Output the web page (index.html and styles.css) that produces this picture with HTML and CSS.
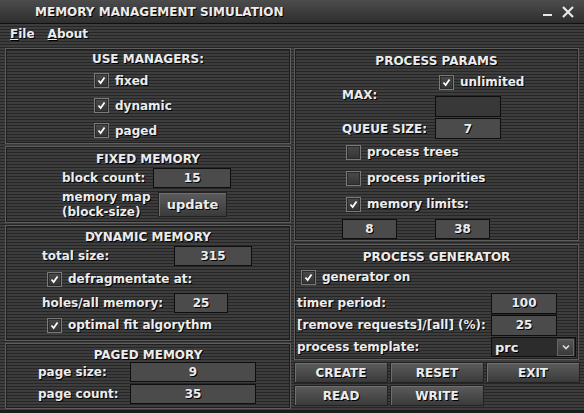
FILE: index.html
```html
<!DOCTYPE html>
<html>
<head>
<meta charset="utf-8">
<link rel="stylesheet" href="styles.css">
</head>
<body>
<div class="window">
  <div class="titlebar">
    <span class="title">MEMORY MANAGEMENT SIMULATION</span>
    <span class="ctrls">
      <span class="min"></span>
      <svg class="close" width="12" height="12" viewBox="0 0 12 12"><path d="M1 1 L11 11 M11 1 L1 11" stroke="#e8e8e8" stroke-width="2.2" fill="none"/></svg>
    </span>
  </div>
  <div class="menubar">
    <span class="menu"><u>F</u>ile</span>
    <span class="menu"><u>A</u>bout</span>
  </div>
  <div class="main">
    <div class="col left">
      <section class="panel p-use">
        <h3>USE MANAGERS:</h3>
        <div class="chkrow"><span class="box on"><svg viewBox="0 0 15 15"><path d="M4 7.5 L6.5 10.5 L11 4" stroke="#fff" stroke-width="2" fill="none"/></svg></span>fixed</div>
        <div class="chkrow"><span class="box on"><svg viewBox="0 0 15 15"><path d="M4 7.5 L6.5 10.5 L11 4" stroke="#fff" stroke-width="2" fill="none"/></svg></span>dynamic</div>
        <div class="chkrow"><span class="box on"><svg viewBox="0 0 15 15"><path d="M4 7.5 L6.5 10.5 L11 4" stroke="#fff" stroke-width="2" fill="none"/></svg></span>paged</div>
      </section>
      <section class="panel p-fixed">
        <h3>FIXED MEMORY</h3>
        <div class="row r-block"><span class="lbl">block count:</span><span class="field w78">15</span></div>
        <div class="row r-map"><span class="lbl two">memory map<br>(block-size)</span><span class="btn upd">update</span></div>
      </section>
      <section class="panel p-dyn">
        <h3>DYNAMIC MEMORY</h3>
        <div class="row r-total"><span class="lbl">total size:</span><span class="field w78">315</span></div>
        <div class="chkrow c-defrag"><span class="box on"><svg viewBox="0 0 15 15"><path d="M4 7.5 L6.5 10.5 L11 4" stroke="#fff" stroke-width="2" fill="none"/></svg></span>defragmentate at:</div>
        <div class="row r-holes"><span class="lbl">holes/all memory:</span><span class="field w54">25</span></div>
        <div class="chkrow c-opt"><span class="box on"><svg viewBox="0 0 15 15"><path d="M4 7.5 L6.5 10.5 L11 4" stroke="#fff" stroke-width="2" fill="none"/></svg></span>optimal fit algorythm</div>
      </section>
      <section class="panel p-paged">
        <h3>PAGED MEMORY</h3>
        <div class="row r-page"><span class="lbl">page size:</span><span class="field w126">9</span></div>
        <div class="row r-page r-page2"><span class="lbl">page count:</span><span class="field w126">35</span></div>
      </section>
    </div>
    <div class="col right">
      <section class="panel p-params">
        <h3>PROCESS PARAMS</h3>
        <div class="pgrid">
          <span class="maxlbl">MAX:</span>
          <div class="chkrow c-unl"><span class="box on"><svg viewBox="0 0 15 15"><path d="M4 7.5 L6.5 10.5 L11 4" stroke="#fff" stroke-width="2" fill="none"/></svg></span>unlimited</div>
          <span class="field w66 empty"></span>
          <span class="qlbl">QUEUE SIZE:</span>
          <span class="field w66">7</span>
        </div>
        <div class="chkrow c-pt c-first"><span class="box"></span>process trees</div>
        <div class="chkrow c-pt"><span class="box"></span>process priorities</div>
        <div class="chkrow c-pt"><span class="box on"><svg viewBox="0 0 15 15"><path d="M4 7.5 L6.5 10.5 L11 4" stroke="#fff" stroke-width="2" fill="none"/></svg></span>memory limits:</div>
        <div class="row r-lim"><span class="field w55">8</span><span class="field w55">38</span></div>
      </section>
      <section class="panel p-gen">
        <h3>PROCESS GENERATOR</h3>
        <div class="chkrow c-gen"><span class="box on"><svg viewBox="0 0 15 15"><path d="M4 7.5 L6.5 10.5 L11 4" stroke="#fff" stroke-width="2" fill="none"/></svg></span>generator on</div>
        <div class="row r-gen r-first"><span class="lbl">timer period:</span><span class="field w66">100</span></div>
        <div class="row r-gen"><span class="lbl">[remove requests]/[all] (%):</span><span class="field w66">25</span></div>
        <div class="row r-gen"><span class="lbl">process template:</span><span class="select"><span class="selval">prc</span><span class="selbtn"><svg width="8" height="6" viewBox="0 0 8 6"><path d="M1 1.5 L4 4.5 L7 1.5" stroke="#ddd" stroke-width="1.6" fill="none"/></svg></span></span></div>
      </section>
      <div class="buttons">
        <span class="btn">CREATE</span>
        <span class="btn">RESET</span>
        <span class="btn">EXIT</span>
        <span class="btn">READ</span>
        <span class="btn">WRITE</span>
      </div>
    </div>
  </div>
</div>
</body>
</html>
```

FILE: styles.css
```css
html, body {
  margin: 0;
  padding: 0;
}
body {
  width: 584px;
  height: 413px;
  overflow: hidden;
  background: #1a1a1a;
  font-family: "DejaVu Sans", "Liberation Sans", sans-serif;
  font-weight: bold;
  font-size: 12px;
  color: #ececec;
}
.window {
  width: 584px;
  height: 413px;
  box-sizing: border-box;
  border-bottom: 3px solid #1c1c1c;
  background: repeating-linear-gradient(to bottom, #3d3d3d 0px, #3d3d3d 2px, #262626 2px, #262626 3px);
  display: flex;
  flex-direction: column;
}
.titlebar {
  height: 23px;
  border-bottom: 1px solid #101010;
  background: linear-gradient(to bottom, #4c4c4c, #2e2e2e);
  display: flex;
  align-items: center;
  justify-content: space-between;
  padding: 0 10px 0 35px;
}
.title {
  text-shadow: 1px 1px 0 #000;
  font-size: 12px;
}
.ctrls {
  display: flex;
  align-items: center;
  gap: 10px;
}
.min {
  width: 9px;
  height: 2px;
  background: #e8e8e8;
  margin-top: 6px;
}
.menubar {
  height: 20px;
  display: flex;
  align-items: center;
  gap: 13px;
  padding-left: 10px;
  text-shadow: 1px 1px 0 #000;
  font-size: 12px;
}
.main {
  display: flex;
  gap: 3px;
  padding: 4px 5px 0 5px;
}
.col {
  display: flex;
  flex-direction: column;
  gap: 2px;
}
.left { width: 286px; }
.right { width: 285px; }
.panel {
  box-sizing: border-box;
  border: 1px solid #5e5e5e;
  box-shadow: inset 1px 1px 0 #1e1e1e, inset -1px -1px 0 #1e1e1e;
  display: flex;
  flex-direction: column;
}
h3 {
  margin: 0;
  font-size: 12px;
  text-align: center;
  text-shadow: 1px 1px 0 #000;
  line-height: 18px;
}
.chkrow, .row, .lbl, .btn, .field {
  text-shadow: 1px 1px 0 #000;
}
.chkrow {
  display: flex;
  align-items: center;
  gap: 6px;
  height: 26px;
  font-size: 12px;
}
.box {
  width: 13px;
  height: 13px;
  border: 1px solid #7a7a7a;
  background: linear-gradient(to bottom, #4a4a4a, #333);
  box-shadow: inset 0 0 0 1px #2a2a2a;
  flex: none;
  display: flex;
}
.box svg { width: 13px; height: 13px; }
.row {
  display: flex;
  align-items: center;
}
.lbl { font-size: 12px; }
.field {
  box-sizing: border-box;
  height: 20px;
  background: #4b4b4b;
  border: 1px solid #0e0e0e;
  display: flex;
  align-items: center;
  justify-content: center;
  font-size: 12px;
}
.field.empty { background: #383838; }
.w78 { width: 78px; }
.w54 { width: 54px; }
.w126 { width: 126px; }
.w66 { width: 66px; }
.w55 { width: 55px; }
.btn {
  box-sizing: border-box;
  display: flex;
  align-items: center;
  justify-content: center;
  background: linear-gradient(to bottom, #5c5c5c, #3a3a3a);
  border: 1px solid #222;
  box-shadow: inset 1px 1px 0 #6e6e6e;
  font-size: 12px;
}

/* use managers */
.p-use { height: 96px; padding-top: 1px; }
.p-use h3 { height: 18px; }
.p-use .chkrow { padding-left: 88px; }

/* fixed */
.p-fixed { height: 77px; }
.p-fixed h3 { height: 21px; line-height: 24px; }
.r-block { height: 20px; padding-left: 56px; gap: 8px; }
.r-map { margin-top: 4px; height: 25px; padding-left: 56px; }
.lbl.two { line-height: 15px; width: 96px; }
.upd { width: 69px; height: 25px; font-size: 13px; }

/* dynamic */
.p-dyn { height: 116px; }
.p-dyn h3 { height: 20px; line-height: 22px; }
.r-total { height: 20px; padding-left: 36px; }
.r-total .lbl { width: 132px; }
.c-defrag { padding-left: 41px; height: 24px; margin-top: 1px; }
.r-holes { height: 20px; margin-top: 2px; padding-left: 36px; }
.r-holes .lbl { width: 132px; }
.c-opt { padding-left: 41px; height: 26px; margin-top: -1px; }

/* paged */
.p-paged { height: 66px; }
.p-paged h3 { height: 18px; line-height: 22px; }
.r-page { height: 20px; padding-left: 32px; }
.r-page .lbl { width: 92px; }
.r-page2 { margin-top: 2px; }

/* process params */
.p-params { height: 193px; }
.p-params h3 { height: 22px; line-height: 24px; }
.pgrid {
  display: grid;
  grid-template-columns: 93px 66px;
  grid-template-rows: 24px 21px 21px;
  row-gap: 1px;
  padding-left: 47px;
}
.maxlbl { grid-column: 1; grid-row: 1 / 3; align-self: center; padding-top: 2px; font-size: 12px; text-shadow: 1px 1px 0 #000; }
.c-unl { grid-column: 2; grid-row: 1; height: 24px; padding-left: 4px; width: 140px; padding-bottom: 2px; box-sizing: border-box; }
.pgrid .empty { grid-column: 2; grid-row: 2; height: 21px; }
.qlbl { grid-column: 1; grid-row: 3; align-self: center; font-size: 12px; text-shadow: 1px 1px 0 #000; }
.pgrid .field { height: 21px; }
.c-pt { padding-left: 51px; height: 26px; }
.c-first { margin-top: 0px; }
.r-lim { padding-left: 47px; gap: 38px; height: 20px; margin-top: 2px; }

/* generator */
.p-gen { height: 116px; margin-top: 1px; }
.p-gen h3 { height: 20px; line-height: 24px; }
.c-gen { padding-left: 6px; height: 24px; }
.r-gen { padding-left: 2px; height: 22px; justify-content: space-between; padding-right: 2px; }
.r-gen .field { height: 21px; margin-right: 19px; }
.r-first { margin-top: 3px; }
.select {
  width: 85px;
  height: 20px;
  box-sizing: border-box;
  background: #2c2c2c;
  border: 1px solid #0e0e0e;
  display: flex;
  align-items: center;
  justify-content: space-between;
}
.selval { padding-left: 3px; font-size: 13px; }
.selbtn {
  width: 17px;
  height: 17px;
  box-sizing: border-box;
  border: 1px solid #666;
  background: linear-gradient(to bottom, #555, #3a3a3a);
  display: flex;
  align-items: center;
  justify-content: center;
  margin-right: 1px;
}

/* buttons */
.buttons {
  display: grid;
  grid-template-columns: 94px 94px 94px;
  grid-auto-rows: 21px;
  gap: 2px;
  margin-top: 0px;
}
```
